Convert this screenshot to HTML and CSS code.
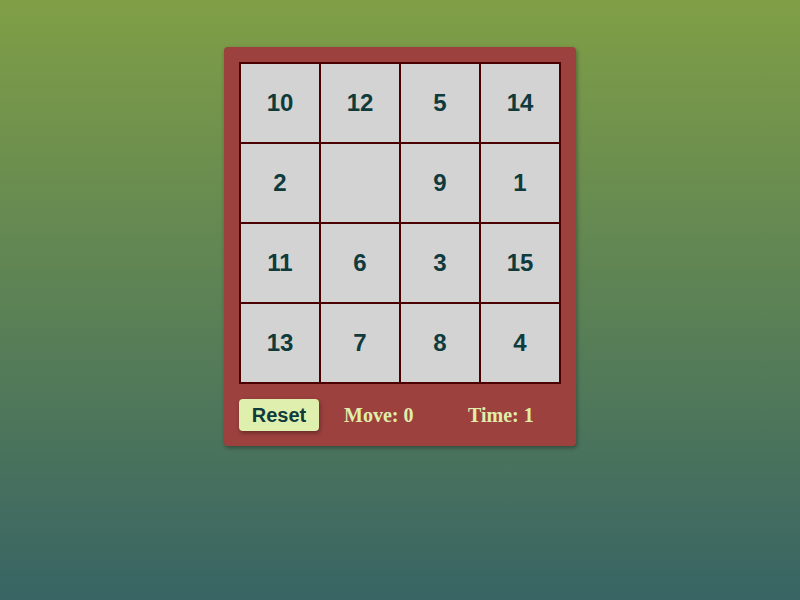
FILE: index.html
```html
<!DOCTYPE html>
<html>
<head>
<meta charset="utf-8">
<link rel="stylesheet" href="styles.css">
</head>
<body>
<div class="panel">
  <div class="board">
    <div class="tile">10</div>
    <div class="tile">12</div>
    <div class="tile">5</div>
    <div class="tile">14</div>
    <div class="tile">2</div>
    <div class="tile"></div>
    <div class="tile">9</div>
    <div class="tile">1</div>
    <div class="tile">11</div>
    <div class="tile">6</div>
    <div class="tile">3</div>
    <div class="tile">15</div>
    <div class="tile">13</div>
    <div class="tile">7</div>
    <div class="tile">8</div>
    <div class="tile">4</div>
  </div>
  <div class="controls">
    <button class="reset">Reset</button>
    <span class="stat move">Move: 0</span>
    <span class="stat time">Time: 1</span>
  </div>
</div>
</body>
</html>
```
FILE: styles.css
```css
html, body {
  margin: 0;
  padding: 0;
  height: 100%;
}
body {
  background: linear-gradient(to bottom, #809f46 0%, #386464 100%);
  display: flex;
  justify-content: center;
  align-items: flex-start;
  font-family: "Liberation Sans", Arial, sans-serif;
}
.panel {
  margin-top: 47px;
  width: 322px;
  padding: 15px;
  background: #9c413e;
  border-radius: 4px;
  box-shadow: 1px 2px 4px rgba(0, 0, 0, 0.35);
}
.board {
  display: grid;
  grid-template-columns: repeat(4, 80px);
  grid-template-rows: repeat(4, 80px);
  border: 1px solid #4a0000;
  width: 320px;
}
.tile {
  box-sizing: border-box;
  border: 1px solid #4a0000;
  background: #d3d3d3;
  display: flex;
  align-items: center;
  justify-content: center;
  font-weight: bold;
  font-size: 24px;
  color: #0f3b3d;
}
.controls {
  display: flex;
  align-items: center;
  margin-top: 15px;
  height: 32px;
}
.reset {
  width: 80px;
  height: 32px;
  border: none;
  border-radius: 4px;
  background: #dff0ae;
  color: #0f3b3d;
  font-family: "Liberation Sans", Arial, sans-serif;
  font-weight: bold;
  font-size: 20px;
  padding: 0;
  box-shadow: 1px 2px 4px rgba(0, 0, 0, 0.35);
}
.stat {
  font-family: "Liberation Serif", "Times New Roman", serif;
  font-weight: bold;
  font-size: 20px;
  color: #e1eeaa;
}
.move {
  margin-left: 25px;
  width: 124px;
}
```
